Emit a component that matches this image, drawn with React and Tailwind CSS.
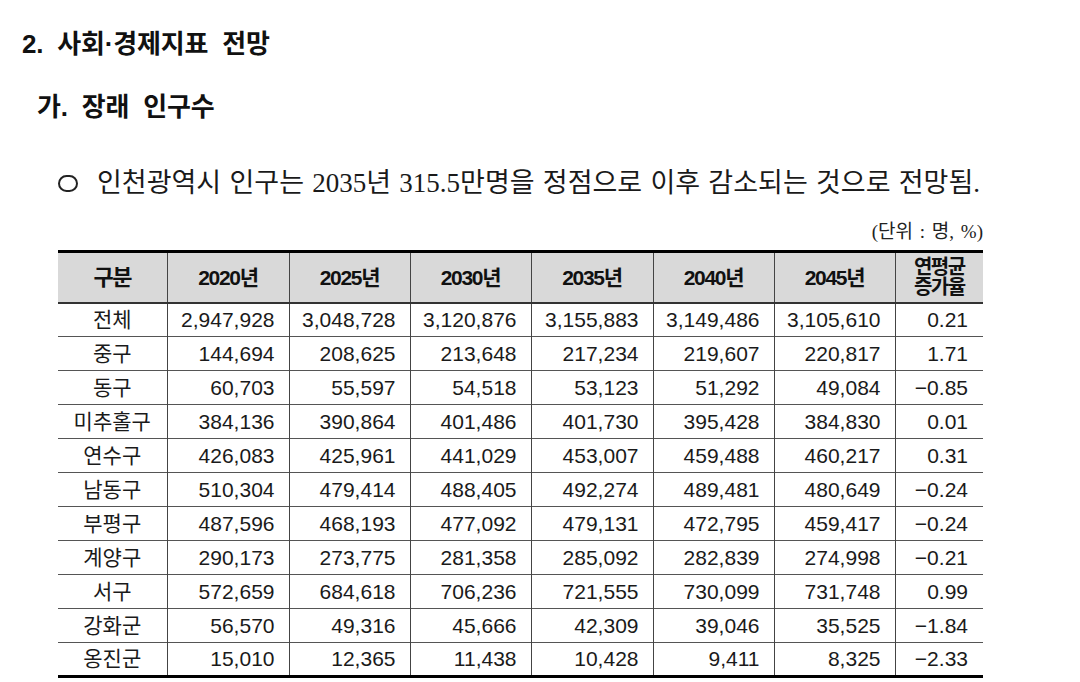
const rows = [
  ["전체", "2,947,928", "3,048,728", "3,120,876", "3,155,883", "3,149,486", "3,105,610", "0.21"],
  ["중구", "144,694", "208,625", "213,648", "217,234", "219,607", "220,817", "1.71"],
  ["동구", "60,703", "55,597", "54,518", "53,123", "51,292", "49,084", "−0.85"],
  ["미추홀구", "384,136", "390,864", "401,486", "401,730", "395,428", "384,830", "0.01"],
  ["연수구", "426,083", "425,961", "441,029", "453,007", "459,488", "460,217", "0.31"],
  ["남동구", "510,304", "479,414", "488,405", "492,274", "489,481", "480,649", "−0.24"],
  ["부평구", "487,596", "468,193", "477,092", "479,131", "472,795", "459,417", "−0.24"],
  ["계양구", "290,173", "273,775", "281,358", "285,092", "282,839", "274,998", "−0.21"],
  ["서구", "572,659", "684,618", "706,236", "721,555", "730,099", "731,748", "0.99"],
  ["강화군", "56,570", "49,316", "45,666", "42,309", "39,046", "35,525", "−1.84"],
  ["옹진군", "15,010", "12,365", "11,438", "10,428", "9,411", "8,325", "−2.33"],
];

const years = ["2020년", "2025년", "2030년", "2035년", "2040년", "2045년"];

const App = () => {
  return (
    <div className="w-[1080px] h-[682px] bg-white text-[#111] overflow-hidden">
      <h1 className="pl-[22px] pt-[28px] text-[26px] leading-[32px] font-bold tracking-[-0.2px] font-['Liberation_Sans','Noto_Sans_CJK_KR',sans-serif]">
        2.&nbsp; 사회·경제지표&nbsp; 전망
      </h1>
      <h2 className="pl-[37px] mt-[31px] text-[26px] leading-[32px] font-bold tracking-[-0.2px] font-['Liberation_Sans','Noto_Sans_CJK_KR',sans-serif]">
        가.&nbsp; 장래&nbsp; 인구수
      </h2>
      <div className="pl-[58px] mt-[42px] flex items-center h-[36px]">
        <span className="w-[20px] h-[17px] rounded-full border-2 border-[#222] mr-[19px]"></span>
        <p className="text-[27px] leading-[36px] text-[#1a1a1a] font-['Liberation_Serif','Noto_Sans_CJK_KR',serif] [word-spacing:1.5px]">
          인천광역시 인구는 2035년 315.5만명을 정점으로 이후 감소되는 것으로 전망됨.
        </p>
      </div>
      <div className="ml-[58px] w-[925px]">
        <p className="mt-[20px] text-right text-[19px] leading-[22px] text-[#222] font-['Liberation_Serif','Noto_Sans_CJK_KR',serif] [word-spacing:2px]">
          (단위 : 명, %)
        </p>
        <table className="mt-[7px] w-full table-fixed border-collapse font-['Liberation_Sans','Noto_Sans_CJK_KR',sans-serif]">
          <colgroup>
            <col className="w-[109px]" />
            <col className="w-[122px]" />
            <col className="w-[121px]" />
            <col className="w-[121px]" />
            <col className="w-[122px]" />
            <col className="w-[121px]" />
            <col className="w-[121px]" />
            <col className="w-[88px]" />
          </colgroup>
          <thead>
            <tr className="h-[51px] bg-[#d9d9d9] border-t-[3px] border-t-black border-b-2 border-b-[#333]">
              <th className="text-[22px] font-bold tracking-[-1.5px] text-center border-r border-r-[#444]">구분</th>
              {years.map((y) => (
                <th key={y} className="text-[21px] font-bold tracking-[-1.3px] text-center border-r border-r-[#444]">
                  {y}
                </th>
              ))}
              <th className="text-[20px] leading-[20px] font-bold tracking-[-1.5px] text-center">
                연평균
                <br />
                증가율
              </th>
            </tr>
          </thead>
          <tbody>
            {rows.map((r, i) => (
              <tr
                key={r[0]}
                className={`h-[34px] ${i === rows.length - 1 ? "border-b-[3px] border-b-black" : "border-b border-b-[#555]"}`}
              >
                <td className="text-[21px] text-center border-r border-r-[#444] text-[#1a1a1a]">{r[0]}</td>
                {r.slice(1, 7).map((v, j) => (
                  <td key={j} className="text-[21px] text-right pr-[14px] border-r border-r-[#444] text-[#1a1a1a]">
                    {v}
                  </td>
                ))}
                <td className="text-[21px] text-right pr-[15px] text-[#1a1a1a]">{r[7]}</td>
              </tr>
            ))}
          </tbody>
        </table>
      </div>
    </div>
  );
};

export default App;
